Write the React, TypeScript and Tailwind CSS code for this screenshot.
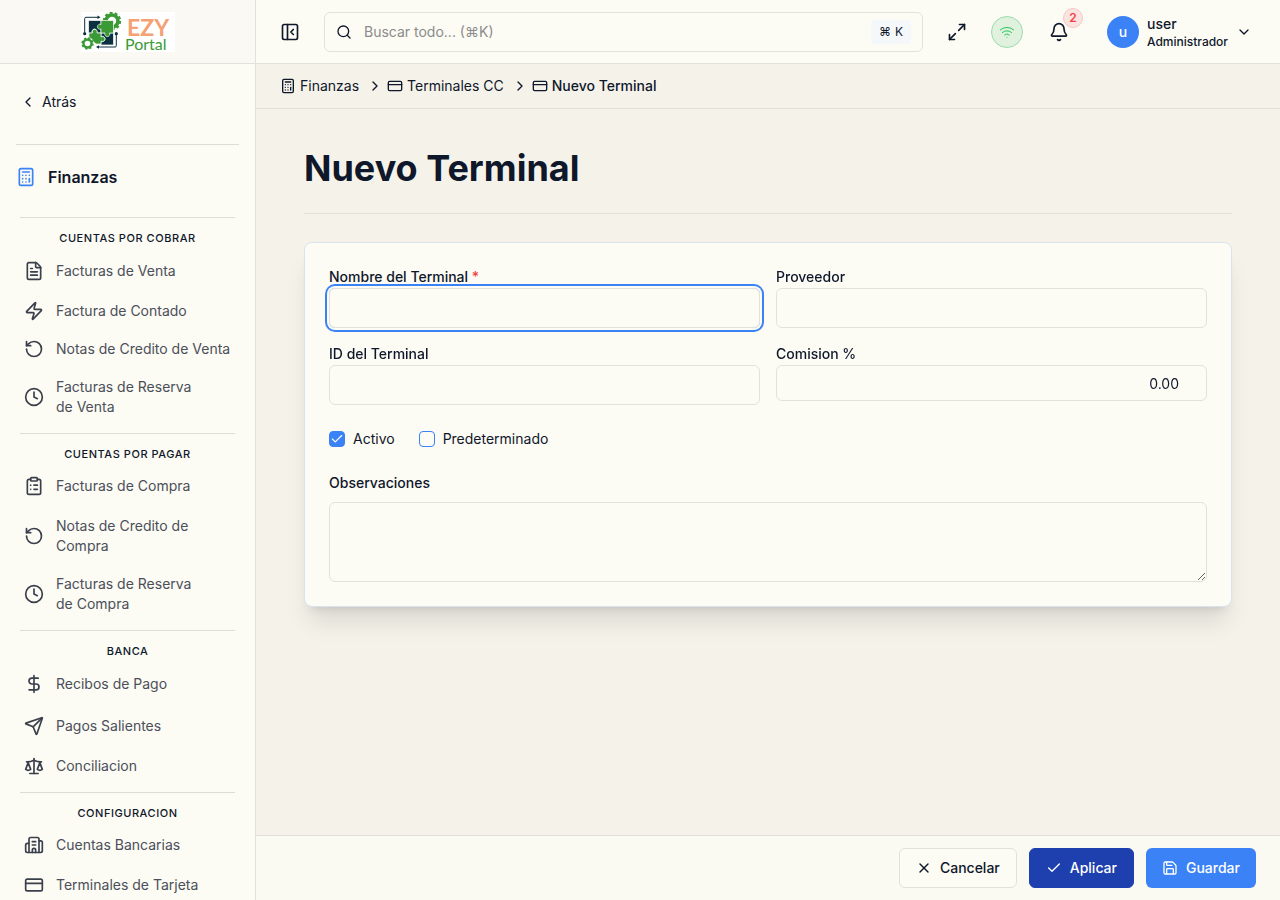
import React, { useState } from 'react';
import {
  Bell,
  Building2,
  Calculator,
  Check,
  ChevronDown,
  ChevronLeft,
  ChevronRight,
  ClipboardList,
  Clock,
  CreditCard,
  DollarSign,
  FileText,
  Maximize2,
  PanelLeftClose,
  RotateCcw,
  Save,
  Scale,
  Search,
  Send,
  Wifi,
  X,
  Zap,
  type LucideIcon,
} from 'lucide-react';

interface NavItem {
  label: string;
  icon: LucideIcon;
  tall?: boolean;
  narrow?: boolean;
}

interface NavSection {
  title: string;
  items: NavItem[];
}

const SECTIONS: NavSection[] = [
  {
    title: 'Cuentas por cobrar',
    items: [
      { label: 'Facturas de Venta', icon: FileText, tall: true },
      { label: 'Factura de Contado', icon: Zap },
      { label: 'Notas de Credito de Venta', icon: RotateCcw },
      { label: 'Facturas de Reserva de Venta', icon: Clock, narrow: true },
    ],
  },
  {
    title: 'Cuentas por pagar',
    items: [
      { label: 'Facturas de Compra', icon: ClipboardList, tall: true },
      { label: 'Notas de Credito de Compra', icon: RotateCcw, narrow: true },
      { label: 'Facturas de Reserva de Compra', icon: Clock, narrow: true },
    ],
  },
  {
    title: 'Banca',
    items: [
      { label: 'Recibos de Pago', icon: DollarSign, tall: true },
      { label: 'Pagos Salientes', icon: Send, tall: true },
      { label: 'Conciliacion', icon: Scale },
    ],
  },
  {
    title: 'Configuracion',
    items: [
      { label: 'Cuentas Bancarias', icon: Building2, tall: true },
      { label: 'Terminales de Tarjeta', icon: CreditCard },
    ],
  },
];

const inputClass =
  'block w-full rounded-md border border-[#e2e1dc] bg-transparent px-3 text-sm text-slate-900 outline-none focus:ring-2 focus:ring-[#3b82f6] focus:ring-offset-2 focus:ring-offset-[#fcfbf4]';

function Logo() {
  return (
    <svg width="94" height="40" viewBox="0 0 94 40" role="img" aria-label="EZY Portal">
      <rect width="94" height="40" fill="#ffffff" />
      {/* Large gear, upper right */}
      <circle cx="31" cy="9" r="6" fill="none" stroke="#3a9a35" strokeWidth="3.600" />
      <circle cx="31" cy="9" r="8.200" fill="none" stroke="#3a9a35" strokeWidth="2" strokeDasharray="2.900 2.250" />
      {/* Puzzle pieces */}
      <g stroke="#ffffff" strokeWidth="0.700">
        <path d="M20 21h12.500v12H20v-4a2.500 2.500 0 1 0 0-4z" fill="#0b3140" />
        <path d="M7.500 8.500H20V21h-4.500a2.500 2.500 0 1 0-4 0h-4z" fill="#0b3140" />
        <path d="M20 8.500h12.500V21h-4a2.500 2.500 0 1 1-4.500 0h-4v-4a2.500 2.500 0 1 1 0-4.500z" fill="#3a9a35" />
        <path d="M8 21h3.500a2.500 2.500 0 1 1 4.500 0h4v4a2.500 2.500 0 1 1 0 4v3h-5l-7-6z" fill="#3a9a35" />
      </g>
      {/* Small gear, lower left */}
      <circle cx="6.500" cy="31.500" r="6.400" fill="#ffffff" />
      <circle cx="6.500" cy="31.500" r="4" fill="none" stroke="#3a9a35" strokeWidth="2.400" />
      <circle cx="6.500" cy="31.500" r="5.400" fill="none" stroke="#3a9a35" strokeWidth="1.600" strokeDasharray="2.200 2.040" />
      {/* Circuit lines */}
      <path d="M3.700 20V6.500q0-1.200 1.200-1.200H17M35.300 23v10.800q0 1.200-1.200 1.200H17" fill="none" stroke="#0b3140" strokeWidth="1" />
      <path d="M16.500 3.500l3 1.800-3 1.800zM18 33.200L15 35l3 1.800z" fill="#0b3140" />
      <circle cx="3.700" cy="21.700" r="1.600" fill="#0b3140" />
      <circle cx="35.300" cy="21.700" r="1.600" fill="#0b3140" />
      <text x="46" y="24" fontFamily="Lato, sans-serif" fontSize="23" fontWeight="700" fill="#f5a173">EZY</text>
      <text x="44" y="38" fontFamily="Lato, sans-serif" fontSize="16" fill="#3a9a35">Portal</text>
    </svg>
  );
}

function Sidebar() {
  return (
    <aside className="flex w-64 shrink-0 flex-col border-r border-[#e2e1dc] bg-[#fcfbf4]">
      <div className="flex h-16 shrink-0 items-center justify-center border-b border-[#e2e1dc] bg-[#faf9f4]">
        <Logo />
      </div>
      <nav className="min-h-0 flex-1 overflow-hidden px-4" aria-label="Finanzas">
        <div className="border-b border-[#dddcd8] pt-5 pb-6">
          <button type="button" className="flex h-9 items-center gap-1.5 pl-1 text-sm text-slate-900">
            <ChevronLeft size={16} />
            Atrás
          </button>
        </div>
        <h2 className="flex items-center gap-3 pt-5 pb-7 text-base font-semibold text-slate-900">
          <Calculator size={20} className="text-[#3b82f6]" />
          Finanzas
        </h2>
        {SECTIONS.map((section) => (
          <section key={section.title} className="mx-1 border-t border-[#dddcd8] pb-2">
            <h3 className="pt-3 pb-1 text-center text-[11px] leading-normal font-medium tracking-wider text-slate-900 uppercase">
              {section.title}
            </h3>
            <ul className="flex flex-col gap-0.5">
              {section.items.map((item) => (
                <li key={item.label}>
                  <a
                    href="#"
                    className={`flex items-center gap-3 py-2 pl-1 text-sm text-[#4b4f5a] ${item.tall ? 'min-h-10' : 'min-h-9'}`}
                  >
                    <item.icon size={20} className="shrink-0 text-[#3a3f4c]" />
                    <span className={item.narrow ? 'max-w-36' : 'max-w-44'}>{item.label}</span>
                  </a>
                </li>
              ))}
            </ul>
          </section>
        ))}
      </nav>
    </aside>
  );
}

function Header() {
  return (
    <header className="flex h-16 shrink-0 items-center border-b border-[#e2e1dc] bg-[#fcfbf4] pr-7 pl-6 text-slate-900">
      <button type="button" aria-label="Contraer menú" className="mr-6 flex h-9 w-5 items-center justify-center">
        <PanelLeftClose size={20} className="shrink-0" />
      </button>
      <label className="flex h-10 min-w-0 flex-1 items-center gap-3 rounded-md border border-[#e2e1dc] px-[11px]">
        <Search size={16} className="shrink-0" />
        <input
          type="search"
          aria-label="Buscar"
          placeholder="Buscar todo... (⌘K)"
          className="min-w-0 flex-1 bg-transparent text-sm outline-none placeholder:text-[#8b8b8b]"
        />
        <kbd className="flex h-6 items-center gap-1 rounded bg-[#f5f8fb] px-2 font-['Inter',sans-serif] text-xs">
          <span>⌘</span>
          <span>K</span>
        </kbd>
      </label>
      <button type="button" aria-label="Pantalla completa" className="ml-4 flex size-9 items-center justify-center">
        <Maximize2 size={20} />
      </button>
      <button
        type="button"
        aria-label="Conectado"
        className="ml-4 flex size-8 items-center justify-center rounded-full border border-[#9bdcae] bg-[#e0f2de] text-[#22c55e]"
      >
        <Wifi size={16} strokeWidth={1.5} />
      </button>
      <button type="button" aria-label="Notificaciones" className="relative ml-4 flex size-10 items-center justify-center">
        <Bell size={20} />
        <span className="absolute -top-1 -right-1 flex size-5 items-center justify-center rounded-full border border-[#f7c9c5] bg-[#fbe4e0] text-xs font-semibold text-[#ef4444]">
          2
        </span>
      </button>
      <button type="button" className="ml-7 flex items-center gap-2 text-left">
        <span className="flex size-8 items-center justify-center rounded-full bg-[#3b82f6] text-sm font-medium text-white">u</span>
        <span className="flex flex-col">
          <span className="text-sm leading-5 font-medium">user</span>
          <span className="text-xs leading-4 font-medium">Administrador</span>
        </span>
        <ChevronDown size={16} />
      </button>
    </header>
  );
}

function Breadcrumb() {
  return (
    <nav aria-label="Ruta" className="shrink-0 border-b border-[#e2e0d8] px-6 py-3 text-slate-900">
      <ol className="flex h-5 items-center gap-1 text-sm">
        <li>
          <a href="#" className="flex items-center gap-1">
            <Calculator size={16} />
            Finanzas
          </a>
        </li>
        <ChevronRight size={16} className="ml-1" />
        <li>
          <a href="#" className="flex items-center gap-1">
            <CreditCard size={16} />
            Terminales CC
          </a>
        </li>
        <ChevronRight size={16} className="ml-1" />
        <li className="flex items-center gap-1 font-medium" aria-current="page">
          <CreditCard size={16} />
          Nuevo Terminal
        </li>
      </ol>
    </nav>
  );
}

interface FieldProps {
  id: string;
  label: string;
  required?: boolean;
  children: React.ReactNode;
}

function Field({ id, label, required, children }: FieldProps) {
  return (
    <div>
      <label htmlFor={id} className="mb-px block text-sm font-medium">
        {label}
        {required && <span className="text-[#ef4444]"> *</span>}
      </label>
      {children}
    </div>
  );
}

interface CheckFieldProps {
  label: string;
  checked: boolean;
  onChange: (val: boolean) => void;
}

function CheckField({ label, checked, onChange }: CheckFieldProps) {
  return (
    <label className="flex items-center gap-2 text-sm">
      <span className="grid size-4 place-items-center">
        <input
          type="checkbox"
          checked={checked}
          onChange={(e) => onChange(e.target.checked)}
          className="col-start-1 row-start-1 size-4 appearance-none rounded border border-[#3b82f6] checked:bg-[#3b82f6]"
        />
        {checked && <Check size={14} strokeWidth={2} className="pointer-events-none col-start-1 row-start-1 text-white" />}
      </span>
      {label}
    </label>
  );
}

function TerminalForm() {
  const [active, setActive] = useState(true);
  const [isDefault, setIsDefault] = useState(false);

  return (
    <form
      id="terminal-form"
      className="rounded-lg border border-[#d9e3f0] bg-[#fcfbf4] p-6 text-slate-900 shadow-xl"
    >
      <div className="grid grid-cols-2 items-start gap-4">
        <Field id="name" label="Nombre del Terminal" required>
          <input id="name" type="text" autoFocus className={`${inputClass} h-10`} />
        </Field>
        <Field id="provider" label="Proveedor">
          <input id="provider" type="text" className={`${inputClass} h-10`} />
        </Field>
        <Field id="terminal-id" label="ID del Terminal">
          <input id="terminal-id" type="text" className={`${inputClass} h-10`} />
        </Field>
        <Field id="fee" label="Comision %">
          <input id="fee" type="text" inputMode="decimal" defaultValue="0.00" className={`${inputClass} h-9 pr-[27px] text-right`} />
        </Field>
      </div>
      <div className="mt-6 flex gap-6">
        <CheckField label="Activo" checked={active} onChange={setActive} />
        <CheckField label="Predeterminado" checked={isDefault} onChange={setIsDefault} />
      </div>
      <div className="mt-6">
        <label htmlFor="notes" className="mb-[9px] block text-sm font-medium">
          Observaciones
        </label>
        <textarea id="notes" className={`${inputClass} h-20 resize-y py-2`} />
      </div>
    </form>
  );
}

function ActionBar() {
  return (
    <footer className="flex shrink-0 justify-end gap-3 border-t border-[#e2e0d8] bg-[#faf9f2] px-6 py-3 text-sm font-medium">
      <button type="button" className="flex h-10 items-center gap-2 rounded-md border border-[#e2e1dc] bg-[#fcfbf4] px-4 text-slate-900">
        <X size={16} />
        Cancelar
      </button>
      <button type="button" className="flex h-10 items-center gap-2 rounded-md border border-[#1e40af] bg-[#1e40af] px-4 text-white">
        <Check size={16} />
        Aplicar
      </button>
      <button type="submit" form="terminal-form" className="flex h-10 items-center gap-2 rounded-md bg-[#3b82f6] px-4 text-white">
        <Save size={16} />
        Guardar
      </button>
    </footer>
  );
}

export default function App() {
  return (
    <div className="flex h-screen overflow-hidden bg-[#f5f2ea] font-['Inter',sans-serif]">
      <Sidebar />
      <div className="flex min-w-0 flex-1 flex-col">
        <Header />
        <Breadcrumb />
        <main className="min-h-0 flex-1 overflow-auto px-12 pt-9">
          <h1 className="mb-7 border-b border-[#e5e1d5] pb-[22px] text-4xl leading-[46px] font-bold text-slate-900">Nuevo Terminal</h1>
          <TerminalForm />
        </main>
        <ActionBar />
      </div>
    </div>
  );
}
